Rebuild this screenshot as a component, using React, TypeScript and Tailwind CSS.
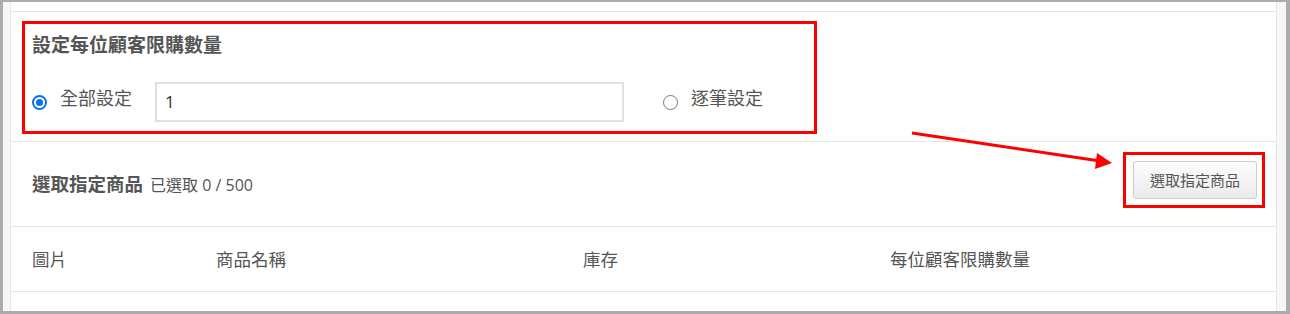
import React from "react";

const FONT = { fontFamily: '"Open Sans", "Noto Sans CJK TC", sans-serif' };

function Radio({ checked }: { checked?: boolean }) {
  return checked ? (
    <span className="flex h-[15px] w-[15px] shrink-0 items-center justify-center rounded-full border-2 border-[#0a6ff0] bg-white">
      <span className="h-[7px] w-[7px] rounded-full bg-[#0a6ff0]" />
    </span>
  ) : (
    <span className="block h-[15px] w-[15px] shrink-0 rounded-full border border-[#777] bg-white" />
  );
}

export default function App() {
  return (
    <div
      className="relative h-[314px] w-[1290px] overflow-hidden bg-[#acacac] pb-[3px] pl-[3px] pr-[4px] pt-[2px] text-[#555]"
      style={FONT}
    >
      <div className="h-full bg-[#f7f7f7] pl-[7px] pr-[9px]">
        <div className="h-full border-x border-[#e6e6e6] bg-white">
          <div className="h-[10px] border-b border-[#e3e3e3]" />

          {/* limit per customer */}
          <div className="h-[130px] border-b border-[#e6e6e6] px-[11px] pt-[9px]">
            <div className="w-[795px] border-[3px] border-[#ff0000] pb-[9px] pl-[7px]">
              <div className="pt-[8px] text-[19px] font-bold leading-[26px]">設定每位顧客限購數量</div>
              <div className="mt-[24px] flex items-center">
                <Radio checked />
                <span className="-mt-[8px] ml-[13px] text-[18px] leading-[24px]">全部設定</span>
                <div className="ml-[23px] flex h-[40px] w-[469px] items-center border-2 border-[#e0e0e0] px-[8px] text-[17px] text-[#333]">
                  1
                </div>
                <span className="ml-[39px]">
                  <Radio />
                </span>
                <span className="-mt-[8px] ml-[13px] text-[18px] leading-[24px]">逐筆設定</span>
              </div>
            </div>
          </div>

          {/* product picker */}
          <div className="flex h-[85px] items-center justify-between border-b border-[#e6e6e6] pb-[18px] pl-[21px] pr-[11px] pt-[10px]">
            <div className="mt-[8px] flex items-baseline gap-[7px]">
              <span className="text-[18.5px] font-bold">選取指定商品</span>
              <span className="text-[16px]">已選取 0 / 500</span>
            </div>
            <div className="border-[3px] border-[#ff0000] py-[6px] pl-[7px] pr-[5px]">
              <button className="h-[38px] w-[124px] rounded-[3px] border border-[#cdcdcd] bg-gradient-to-b from-[#fdfdfd] to-[#ebebeb] text-[15px] text-[#555]">
                選取指定商品
              </button>
            </div>
          </div>

          {/* table header */}
          <div className="grid h-[65px] grid-cols-[184px_367px_307px_1fr] items-center border-b border-[#e6e6e6] pl-[21px] text-[17.5px]">
            <span>圖片</span>
            <span>商品名稱</span>
            <span>庫存</span>
            <span>每位顧客限購數量</span>
          </div>
        </div>
      </div>

      <svg className="pointer-events-none absolute left-0 top-0" width="1290" height="314">
        <line x1="912" y1="133" x2="1100" y2="161" stroke="#ff0000" strokeWidth="3" />
        <polygon points="1112,163 1097,153 1095,169" fill="#ff0000" />
      </svg>
    </div>
  );
}
